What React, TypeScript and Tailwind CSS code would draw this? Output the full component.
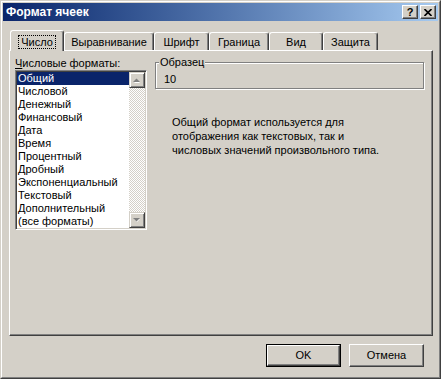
import React from "react";

const tabs = [
  { label: "Выравнивание", w: "w-[90px]" },
  { label: "Шрифт", w: "w-[55px]" },
  { label: "Граница", w: "w-[60px]" },
  { label: "Вид", w: "w-[54px]" },
  { label: "Защита", w: "w-[55px]" },
];

const items = [
  "Общий",
  "Числовой",
  "Денежный",
  "Финансовый",
  "Дата",
  "Время",
  "Процентный",
  "Дробный",
  "Экспоненциальный",
  "Текстовый",
  "Дополнительный",
  "(все форматы)",
];

function ScrollBtn({ up }: { up: boolean }) {
  return (
    <div className="w-[16px] h-[16px] bg-[#d4d0c8] border border-t-[#d4d0c8] border-l-[#d4d0c8] border-r-[#404040] border-b-[#404040] shadow-[inset_1px_1px_0_#ffffff,inset_-1px_-1px_0_#808080] flex items-center justify-center">
      <svg width="8" height="5" viewBox="0 0 8 5">
        {up ? (
          <>
            <path d="M1 5 L4 2 L7 5 Z" fill="#ffffff" />
            <path d="M0 4 L3.5 0.5 L7 4 Z" fill="#808080" />
          </>
        ) : (
          <>
            <path d="M1 1 L4 4 L7 1 Z" fill="#ffffff" />
            <path d="M0 0 L7 0 L3.5 3.5 Z" fill="#808080" />
          </>
        )}
      </svg>
    </div>
  );
}

export default function App() {
  return (
    <div className="w-[441px] h-[379px] bg-[#d4d0c8] border border-t-[#d4d0c8] border-l-[#d4d0c8] border-r-[#404040] border-b-[#404040] font-['Liberation_Sans',Arial,sans-serif] text-[11px] leading-[13px] text-black select-none">
      <div className="h-full border border-t-white border-l-white border-r-[#808080] border-b-[#808080] p-[1px] flex flex-col">
        {/* Title bar */}
        <div className="h-[18px] shrink-0 bg-gradient-to-r from-[#0a246a] to-[#a6caf0] flex items-center pl-[3px] pr-[2px]">
          <span className="text-white font-bold text-[12px] flex-1">Формат ячеек</span>
          <div className="flex gap-[2px]">
            <div className="w-[16px] h-[14px] bg-[#d4d0c8] border border-t-white border-l-white border-r-[#404040] border-b-[#404040] shadow-[inset_-1px_-1px_0_#808080] flex items-center justify-center">
              <span className="font-bold text-[11px] leading-[11px] text-black">?</span>
            </div>
            <div className="w-[16px] h-[14px] bg-[#d4d0c8] border border-t-white border-l-white border-r-[#404040] border-b-[#404040] shadow-[inset_-1px_-1px_0_#808080] flex items-center justify-center">
              <svg width="8" height="7" viewBox="0 0 8 7">
                <path d="M0.5 0 L7.5 7 M7.5 0 L0.5 7" stroke="#000" strokeWidth="1.6" />
              </svg>
            </div>
          </div>
        </div>

        {/* Body */}
        <div className="flex flex-col">
          {/* Tabs */}
          <div className="mt-[9px] ml-[7px] h-[20px] flex items-end">
            <div className="relative z-10 -mb-[1px] w-[54px] h-[21px] bg-[#d4d0c8] border-t border-l border-r border-t-white border-l-white border-r-[#404040] rounded-t-[3px] shadow-[inset_-1px_0_0_#808080] flex justify-center pt-[4px]">
              <span className="h-[14px] px-[3px] outline outline-1 outline-dotted outline-black -outline-offset-1 leading-[14px]">
                Число
              </span>
            </div>
            {tabs.map((t) => (
              <div
                key={t.label}
                className={`${t.w} h-[18px] bg-[#d4d0c8] border-t border-l border-r border-t-white border-l-white border-r-[#404040] rounded-t-[3px] shadow-[inset_-1px_0_0_#808080] flex justify-center pt-[3px]`}
              >
                {t.label}
              </div>
            ))}
          </div>

          {/* Panel */}
          <div className="ml-[6px] w-[424px] h-[286px] border border-t-white border-l-white border-r-[#404040] border-b-[#404040] shadow-[inset_-1px_-1px_0_#808080] flex pl-[5px] gap-[8px]">
            {/* Left column */}
            <div className="flex flex-col pt-[6px]">
              <div className="h-[13px]">
                <span className="underline">Ч</span>исловые форматы:
              </div>
              <div className="w-[132px] h-[160px] bg-white border border-t-[#808080] border-l-[#808080] border-r-white border-b-white shadow-[inset_1px_1px_0_#404040,inset_-1px_-1px_0_#d4d0c8] p-[1px] flex">
                <div className="flex-1 flex flex-col">
                  {items.map((it, i) => (
                    <div
                      key={it}
                      className={`h-[13px] leading-[13px] pl-[1px] whitespace-nowrap ${
                        i === 0 ? "bg-[#0a246a] text-white" : ""
                      }`}
                    >
                      {it}
                    </div>
                  ))}
                </div>
                <div className="w-[16px] flex flex-col">
                  <ScrollBtn up={true} />
                  <div className="flex-1 bg-[repeating-conic-gradient(#d4d0c8_0%_25%,#ffffff_0%_50%)] bg-[length:2px_2px]" />
                  <ScrollBtn up={false} />
                </div>
              </div>
            </div>

            {/* Right column */}
            <div className="flex flex-col pt-[11px]">
              <div className="relative w-[269px] h-[27px] border border-[#808080] shadow-[inset_1px_1px_0_#ffffff,1px_1px_0_#ffffff] pl-[8px] pt-[10px]">
                <span className="absolute -top-[7px] left-[3px] bg-[#d4d0c8] px-[1px]">Образец</span>
                <span>10</span>
              </div>
              <div className="mt-[26px] ml-[17px] leading-[14px]">
                Общий формат используется для
                <br />
                отображения как текстовых, так и
                <br />
                числовых значений произвольного типа.
              </div>
            </div>
          </div>

          {/* Buttons */}
          <div className="mt-[8px] flex justify-end gap-[8px] pr-[14px]">
            <div className="w-[75px] h-[23px] border border-black">
              <div className="h-full bg-[#d4d0c8] border border-t-white border-l-white border-r-[#404040] border-b-[#404040] shadow-[inset_-1px_-1px_0_#808080] flex items-center justify-center">
                OK
              </div>
            </div>
            <div className="w-[75px] h-[23px] bg-[#d4d0c8] border border-t-white border-l-white border-r-[#404040] border-b-[#404040] shadow-[inset_-1px_-1px_0_#808080] flex items-center justify-center">
              Отмена
            </div>
          </div>
        </div>
      </div>
    </div>
  );
}
